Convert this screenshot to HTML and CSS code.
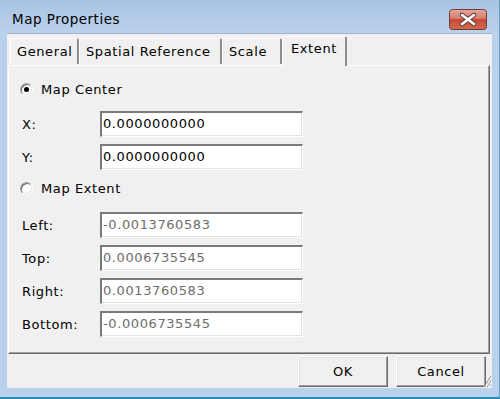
FILE: index.html
```html
<!DOCTYPE html>
<html lang="en">

<head>
    <title>Map Properties</title>
    <link rel="stylesheet" href="styles.css">
</head>

<body>
    <div class="window">
        <div class="titlebar">
            <span class="title">Map Properties</span>
            <button class="close-btn" title="Close">
                <svg width="38" height="21" viewBox="0 0 38 21">
                    <defs>
                        <linearGradient id="closeGrad" x1="0" y1="0" x2="0" y2="1">
                            <stop offset="0" stop-color="#e6a99c" />
                            <stop offset="0.45" stop-color="#d47a6a" />
                            <stop offset="0.5" stop-color="#c24a36" />
                            <stop offset="1" stop-color="#d26a50" />
                        </linearGradient>
                    </defs>
                    <rect x="0.5" y="0.5" width="37" height="20" rx="3" fill="url(#closeGrad)" stroke="#6e3a3a" />
                    <path d="M13 6 L25 15 M25 6 L13 15" stroke="#5e3b3b" stroke-width="4.6" stroke-linecap="round" />
                    <path d="M13 6 L25 15 M25 6 L13 15" stroke="#ffffff" stroke-width="2.6" stroke-linecap="round" />
                </svg>
            </button>
        </div>

        <div class="client">
            <div class="tabs">
                <div class="tab tab-general">General</div>
                <div class="tab tab-spatial">Spatial Reference</div>
                <div class="tab tab-scale">Scale</div>
                <div class="tab tab-extent selected">Extent</div>
            </div>

            <div class="panel">
                <label class="radio-row first">
                    <span class="radio checked"></span>
                    <span>Map Center</span>
                </label>

                <div class="fields">
                    <span class="field-label">X:</span>
                    <div class="textbox">0.0000000000</div>
                    <span class="field-label">Y:</span>
                    <div class="textbox">0.0000000000</div>
                </div>

                <label class="radio-row second">
                    <span class="radio"></span>
                    <span>Map Extent</span>
                </label>

                <div class="fields extent-fields">
                    <span class="field-label">Left:</span>
                    <div class="textbox disabled">-0.0013760583</div>
                    <span class="field-label">Top:</span>
                    <div class="textbox disabled">0.0006735545</div>
                    <span class="field-label">Right:</span>
                    <div class="textbox disabled">0.0013760583</div>
                    <span class="field-label">Bottom:</span>
                    <div class="textbox disabled">-0.0006735545</div>
                </div>
            </div>

            <div class="buttons">
                <button class="push-btn">OK</button>
                <button class="push-btn">Cancel</button>
            </div>

            <svg class="grip" width="12" height="18" viewBox="0 0 12 18">
                <path d="M11 6 L4 17 M11 10 L7 17 M11 14 L9 17" stroke="#a0a0a0" stroke-width="1.2" />
                <path d="M12 7 L5 18 M12 11 L8 18" stroke="#ffffff" stroke-width="1" />
            </svg>
        </div>
    </div>
</body>

</html>
```

FILE: styles.css
```css
* {
    box-sizing: border-box;
}

body {
    margin: 0;
    padding: 0;
    background-color: #b9d1ea;
    font-family: "DejaVu Sans", sans-serif;
    font-size: 13px;
    letter-spacing: 0.6px;
    color: #000;
}

.window {
    width: 500px;
    height: 399px;
    padding: 0 7px 9px 7px;
    background: linear-gradient(#a8c3e3, #bad1eb 32px, #bad1eb);
    border-right: 1px solid #5e9fc4;
    border-bottom: 2px solid #2a8db4;
    display: flex;
    flex-direction: column;
}

/* title bar */

.titlebar {
    height: 33px;
    padding: 9px 5px 0 5px;
    display: flex;
    justify-content: space-between;
    align-items: flex-start;
}

.title {
    line-height: 21px;
    font-size: 13.5px;
    letter-spacing: 0.5px;
}

.close-btn {
    width: 38px;
    height: 21px;
    padding: 0;
    border: none;
    background: none;
}

.close-btn svg {
    display: block;
}

/* client area */

.client {
    position: relative;
    flex: 1;
    background-color: #f0f0f0;
    border-top: 1px solid #9fb3cb;
    padding-top: 1px;
    display: flex;
    flex-direction: column;
}

.tabs {
    height: 30px;
    margin-left: 3px;
    display: flex;
    align-items: flex-end;
    position: relative;
    z-index: 1;
}

.tab {
    height: 26px;
    margin-bottom: 1px;
    padding: 5px 0 0 6px;
    border-top: 1px solid #ffffff;
    border-left: 1px solid #ffffff;
    border-right: 2px solid #8e8e8e;
    border-radius: 2px 2px 0 0;
    white-space: nowrap;
}

.tab-general { width: 69px; }
.tab-spatial { width: 143px; }
.tab-scale { width: 60px; }

.tab.selected {
    width: 65px;
    height: 30px;
    margin-bottom: -1px;
    padding: 4px 0 0 8px;
    background-color: #f0f0f0;
}

.panel {
    height: 289px;
    margin: 0 2px 0 1px;
    border-top: 1px solid #ffffff;
    border-left: 1px solid #ffffff;
    border-right: 1px solid #696969;
    border-bottom: 1px solid #696969;
    box-shadow: inset -1px -1px 0 #a0a0a0;
}

/* radio buttons */

.radio-row {
    height: 20px;
    margin-left: 11px;
    display: flex;
    align-items: center;
    gap: 8px;
}

.radio-row.first { margin-top: 13px; }
.radio-row.second { margin-top: 8px; }

.radio {
    width: 13px;
    height: 13px;
    border-radius: 50%;
    background-color: #ffffff;
    border: 1px solid;
    border-color: #a0a0a0 #ffffff #ffffff #a0a0a0;
    box-shadow: inset 1px 1px 0 #696969, inset -1px -1px 0 #e3e3e3;
    position: relative;
}

.radio.checked::after {
    content: "";
    position: absolute;
    left: 3px;
    top: 3px;
    width: 5px;
    height: 5px;
    border-radius: 50%;
    background-color: #000;
}

/* text fields */

.fields {
    margin: 12px 0 0 13px;
    display: grid;
    grid-template-columns: 78px 203px;
    row-gap: 7px;
    align-items: center;
}

.extent-fields {
    margin-top: 14px;
}

.textbox {
    height: 26px;
    padding: 0 0 0 1px;
    line-height: 21px;
    background-color: #ffffff;
    border: 1px solid;
    border-color: #a0a0a0 #ffffff #ffffff #a0a0a0;
    border-top-width: 2px;
    border-left-width: 2px;
    border-top-color: #7a7a7a;
    border-left-color: #7a7a7a;
    box-shadow: inset -1px -1px 0 #e3e3e3;
    white-space: nowrap;
}

.textbox.disabled {
    color: #6d6d6d;
}

/* dialog buttons */

.buttons {
    margin-top: 2px;
    margin-right: 6px;
    display: flex;
    justify-content: flex-end;
    gap: 8px;
}

.push-btn {
    width: 90px;
    height: 31px;
    padding: 0;
    font-family: "DejaVu Sans", sans-serif;
    font-size: 13px;
    letter-spacing: 0.6px;
    color: #000;
    background-color: #f0f0f0;
    border: 1px solid;
    border-color: #ffffff #696969 #696969 #ffffff;
    box-shadow: inset -1px -1px 0 #a0a0a0, inset 1px 1px 0 #e3e3e3;
}

.grip {
    position: absolute;
    right: 0;
    bottom: 0;
}
```
